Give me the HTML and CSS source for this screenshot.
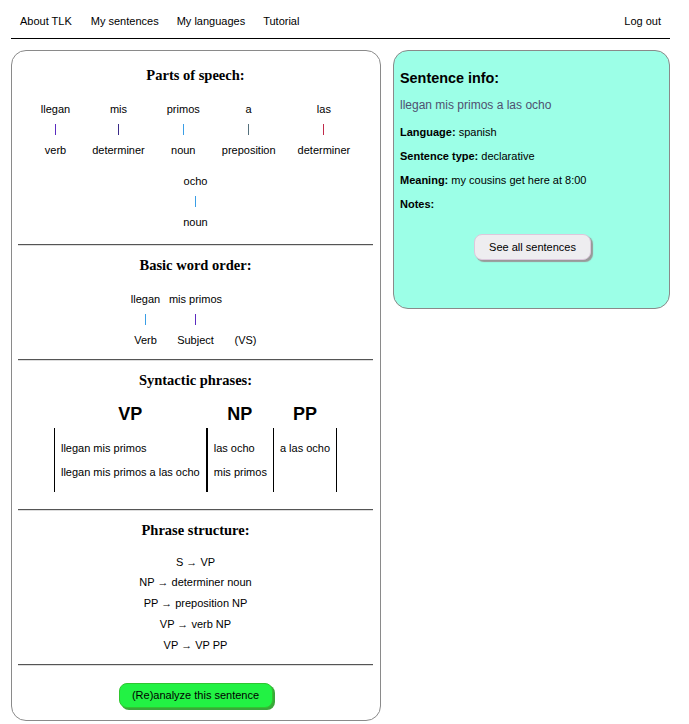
FILE: index.html
```html
<!DOCTYPE html>
<html>
<head>
<meta charset="utf-8">
<title>TLK</title>
<link rel="stylesheet" href="styles.css">
</head>
<body>
<nav class="topnav">
  <div class="nav-left">
    <a class="nav-link" href="#">About TLK</a>
    <a class="nav-link" href="#">My sentences</a>
    <a class="nav-link" href="#">My languages</a>
    <a class="nav-link" href="#">Tutorial</a>
  </div>
  <a class="nav-link" href="#">Log out</a>
</nav>
<div class="main">
  <div class="panel analysis">
    <section class="sec sec-pos">
      <h2 class="sec-title">Parts of speech:</h2>
      <div class="pos-row">
        <div class="pos-item"><div>llegan</div><div class="bar-line"><span class="bar c-verb"></span></div><div>verb</div></div>
        <div class="pos-item"><div>mis</div><div class="bar-line"><span class="bar c-det1"></span></div><div>determiner</div></div>
        <div class="pos-item"><div>primos</div><div class="bar-line"><span class="bar c-noun"></span></div><div>noun</div></div>
        <div class="pos-item"><div>a</div><div class="bar-line"><span class="bar c-prep"></span></div><div>preposition</div></div>
        <div class="pos-item"><div>las</div><div class="bar-line"><span class="bar c-det2"></span></div><div>determiner</div></div>
        <div class="pos-item"><div>ocho</div><div class="bar-line"><span class="bar c-noun"></span></div><div>noun</div></div>
      </div>
    </section>
    <hr class="sep">
    <section class="sec sec-order">
      <h2 class="sec-title">Basic word order:</h2>
      <div class="order-row">
        <div class="order-item"><div>llegan</div><div class="bar-line"><span class="bar c-noun"></span></div><div>Verb</div></div>
        <div class="order-item"><div>mis primos</div><div class="bar-line"><span class="bar c-verb"></span></div><div>Subject</div></div>
        <div class="order-item"><div>&nbsp;</div><div class="bar-line"></div><div>(VS)</div></div>
      </div>
    </section>
    <hr class="sep">
    <section class="sec sec-phr">
      <h2 class="sec-title">Syntactic phrases:</h2>
      <div class="phr-table">
        <div class="phr-col phr-vp">
          <div class="phr-head">VP</div>
          <div class="phr-body"><div>llegan mis primos</div><div>llegan mis primos a las ocho</div></div>
        </div>
        <div class="phr-col phr-np">
          <div class="phr-head">NP</div>
          <div class="phr-body"><div>las ocho</div><div>mis primos</div></div>
        </div>
        <div class="phr-col phr-pp">
          <div class="phr-head">PP</div>
          <div class="phr-body"><div>a las ocho</div></div>
        </div>
      </div>
    </section>
    <hr class="sep">
    <section class="sec sec-rules">
      <h2 class="sec-title">Phrase structure:</h2>
      <div class="rules">
        <div>S → VP</div>
        <div>NP → determiner noun</div>
        <div>PP → preposition NP</div>
        <div>VP → verb NP</div>
        <div>VP → VP PP</div>
      </div>
    </section>
    <hr class="sep">
    <div class="btn-wrap">
      <button class="btn btn-green">(Re)analyze this sentence</button>
    </div>
  </div>
  <div class="panel info">
    <h2 class="info-title">Sentence info:</h2>
    <p class="info-sentence">llegan mis primos a las ocho</p>
    <p class="info-line"><b>Language:</b> spanish</p>
    <p class="info-line"><b>Sentence type:</b> declarative</p>
    <p class="info-line"><b>Meaning:</b> my cousins get here at 8:00</p>
    <p class="info-line"><b>Notes:</b></p>
    <div class="info-btn-wrap">
      <button class="btn btn-gray">See all sentences</button>
    </div>
  </div>
</div>
</body>
</html>
```

FILE: styles.css
```css
* { box-sizing: border-box; }
html, body { margin: 0; padding: 0; background: #fff; }
body {
  font-family: "Liberation Sans", Arial, sans-serif;
  font-size: 11px;
  color: #000;
}
.topnav {
  margin-left: 11px;
  width: 659px;
  display: flex;
  justify-content: space-between;
  padding: 15px 0 10px;
  border-bottom: 1px solid #000;
  line-height: 13px;
}
.nav-left { display: flex; }
.nav-link {
  color: #000;
  text-decoration: none;
  padding: 0 9px;
}
.nav-left .nav-link:first-child { padding-right: 10px; }
.main {
  margin: 11px 0 0 11px;
  width: 659px;
  display: flex;
  align-items: flex-start;
  gap: 12px;
}
.panel {
  border: 1px solid #8a8a8a;
  border-radius: 15px;
}
.analysis {
  width: 370px;
  padding: 0 7px 12px 6px;
  background: #fff;
}
.sec { text-align: center; }
.sec-title {
  font-family: "Liberation Serif", "Times New Roman", serif;
  font-weight: bold;
  font-size: 14.5px;
  line-height: 18px;
  margin: 10px 0 15px;
}
.sec-pos .sec-title { margin-top: 15px; }
.sep {
  margin: 0;
  height: 2px;
  border: 0;
  border-top: 1px solid #555;
  border-bottom: 1px solid #ddd;
}
.pos-row, .order-row {
  display: flex;
  flex-wrap: wrap;
  justify-content: center;
}
.pos-item {
  margin: 0 11px 10px;
  line-height: 20.5px;
  display: flex;
  flex-direction: column;
  align-items: center;
}
.sec-pos { padding-bottom: 1.5px; }
.order-item {
  width: 50px;
  line-height: 20.5px;
  margin-bottom: 8.5px;
  display: flex;
  flex-direction: column;
  align-items: center;
  white-space: nowrap;
}
.bar-line {
  height: 20.5px;
  display: flex;
  align-items: center;
  justify-content: center;
}
.bar {
  display: block;
  width: 1px;
  height: 11px;
}
.c-verb { background: #5a2cc0; }
.c-det1 { background: #3a2a88; }
.c-noun { background: #3a9ee6; }
.c-prep { background: #55707c; }
.c-det2 { background: #c02a4a; }

.phr-table {
  display: flex;
  justify-content: center;
  text-align: left;
  padding-bottom: 17px;
}
.phr-head {
  font-family: "Liberation Sans", Arial, sans-serif;
  font-weight: bold;
  font-size: 18px;
  line-height: 24px;
  text-align: center;
  margin-top: -2px;
  margin-bottom: 2px;
}
.phr-body {
  padding: 8px 6px;
  line-height: 24px;
  height: 64px;
  white-space: nowrap;
}
.phr-vp .phr-body { border-left: 1px solid #000; border-right: 1px solid #000; }
.phr-np .phr-body { border-left: 1px solid #000; }
.phr-pp .phr-body { border-left: 1px solid #000; border-right: 1px solid #000; }

.sec-rules .sec-title { margin-bottom: 13px; }
.rules { line-height: 20.75px; padding-bottom: 8.5px; }

.btn-wrap {
  display: flex;
  justify-content: center;
  padding: 17px 0 0;
}
.btn {
  font-family: "Liberation Sans", Arial, sans-serif;
  font-size: 11px;
  color: #000;
  border-radius: 8px;
  cursor: pointer;
}
.btn-green {
  width: 154px;
  height: 25px;
  background: #22f244;
  border: 1px solid #2fc62f;
  box-shadow: 2px 2px 0 #3aa83a;
}
.info {
  width: 277px;
  background: #9cffe7;
  padding: 0 6px 48px;
}
.info-title {
  font-size: 14.4px;
  font-weight: bold;
  line-height: 18px;
  margin: 18px 0 0;
}
.info-sentence {
  font-size: 12px;
  line-height: 14px;
  color: #4f5070;
  margin: 11px 0 13px;
}
.info-line {
  line-height: 14px;
  margin: 0 0 10px;
}
.info-btn-wrap {
  display: flex;
  justify-content: center;
  padding-top: 13px;
  padding-left: 2px;
}
.btn-gray {
  width: 117px;
  height: 26px;
  background: #eeedf0;
  border: 1px solid #dcc8dc;
  box-shadow: 2px 2px 1px #999;
}
```
